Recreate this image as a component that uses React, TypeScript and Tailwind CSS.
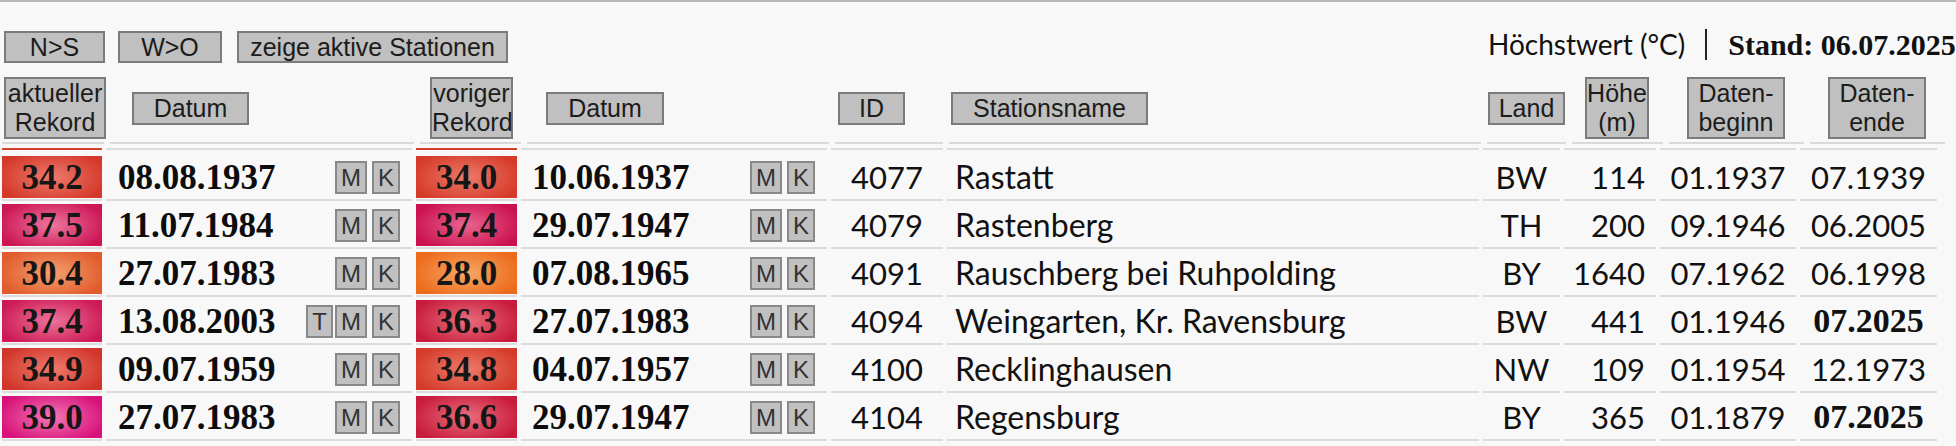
import React from "react";

type Row = {
  a: string;
  ad: string;
  t?: boolean;
  ac: [string, string];
  v: string;
  vd: string;
  vc: [string, string];
  id: string;
  name: string;
  land: string;
  h: string;
  b: string;
  e: string;
  eb?: boolean;
};

const rows: Row[] = [
  { a: "34.2", ad: "08.08.1937", ac: ["#ec7a6c", "#d5392b"], v: "34.0", vd: "10.06.1937", vc: ["#ec7a6a", "#d63b2a"], id: "4077", name: "Rastatt", land: "BW", h: "114", b: "01.1937", e: "07.1939" },
  { a: "37.5", ad: "11.07.1984", ac: ["#ee779e", "#cc1555"], v: "37.4", vd: "29.07.1947", vc: ["#e8658e", "#cb1150"], id: "4079", name: "Rastenberg", land: "TH", h: "200", b: "09.1946", e: "06.2005" },
  { a: "30.4", ad: "27.07.1983", ac: ["#f4a070", "#e15b2b"], v: "28.0", vd: "07.08.1965", vc: ["#f7a866", "#ec6b1b"], id: "4091", name: "Rauschberg bei Ruhpolding", land: "BY", h: "1640", b: "07.1962", e: "06.1998" },
  { a: "37.4", ad: "13.08.2003", t: true, ac: ["#ec749a", "#cd1a55"], v: "36.3", vd: "27.07.1983", vc: ["#e86e7c", "#c81c3c"], id: "4094", name: "Weingarten, Kr. Ravensburg", land: "BW", h: "441", b: "01.1946", e: "07.2025", eb: true },
  { a: "34.9", ad: "09.07.1959", ac: ["#ee7a6c", "#d2352a"], v: "34.8", vd: "04.07.1957", vc: ["#ee7a6a", "#d53b2a"], id: "4100", name: "Recklinghausen", land: "NW", h: "109", b: "01.1954", e: "12.1973" },
  { a: "39.0", ad: "27.07.1983", ac: ["#f478b6", "#d8127a"], v: "36.6", vd: "29.07.1947", vc: ["#e86e7c", "#c91b3c"], id: "4104", name: "Regensburg", land: "BY", h: "365", b: "01.1879", e: "07.2025", eb: true },
];

const OPT = "font-['Lato','Noto_Sans',sans-serif]";
const SERIFB = "font-['Liberation_Serif','Times_New_Roman',serif] font-bold";

const hbox =
  "bg-[#c0c0c0] border-2 border-[#7b7b7b] text-[25px] leading-[29px] text-center text-[#1c1c1c] font-['Liberation_Sans',Arial,sans-serif]";
const one = "h-[33px] mt-[15px]";
const two = "h-[62px]";

function Mini({ children, className = "" }: { children: React.ReactNode; className?: string }) {
  return (
    <div
      className={
        "h-[33px] px-[4px] bg-[#c0c0c0] border-2 border-[#888888] text-[24px] leading-[29px] text-[#333333] font-['Liberation_Sans',Arial,sans-serif] " +
        className
      }
    >
      {children}
    </div>
  );
}

function Buttons({ t }: { t?: boolean }) {
  return (
    <div className="ml-auto flex items-center">
      {t && <Mini className="mr-[2px]">T</Mini>}
      <Mini className="mr-[5px]">M</Mini>
      <Mini>K</Mini>
    </div>
  );
}

const cell = "h-[45px] border-b-2 border-[#dcdcdc]";
const hcell = "h-[67px] border-b-2 border-[#dadada]";

export default function App() {
  return (
    <div className="w-[1956px] h-[446px] overflow-hidden bg-[#f8f8f8] border-t-2 border-[#b9b9b9] text-[#111111]">
      {/* toolbar */}
      <div className="flex items-start mt-[29px] h-[32px]">
        <div className="flex w-[1488px] pl-[4px]">
          <div className={hbox + " w-[101px] h-[32px]"}>N&gt;S</div>
          <div className={hbox + " ml-[13px] w-[104px] h-[32px]"}>W&gt;O</div>
          <div className={hbox + " ml-[15px] w-[271px] h-[32px]"}>zeige aktive Stationen</div>
        </div>
        <div className="flex items-center h-[32px] mt-[-3px]">
          <span className={OPT + " text-[28px] text-[#111111] whitespace-nowrap"}>Höchstwert (°C)</span>
          <span className="ml-[20px] mr-[21px] w-[2px] h-[31px] bg-[#222222]" />
          <span className={SERIFB + " text-[30px] text-[#111111] whitespace-nowrap"}>Stand: 06.07.2025</span>
        </div>
      </div>

      {/* header */}
      <div className="grid grid-cols-[102px_304px_101px_302px_108px_532px_79px_91px_135px_135px] gap-x-[6px] ml-[2px] mt-[14px]">
        <div className={hcell}>
          <div className={hbox + " " + two + " ml-[2px] w-[102px]"}>
            aktueller
            <br />
            Rekord
          </div>
        </div>
        <div className={hcell}>
          <div className={hbox + " " + one + " ml-[22px] w-[117px]"}>Datum</div>
        </div>
        <div className={hcell}>
          <div className={hbox + " " + two + " ml-[10px] w-[83px]"}>
            voriger
            <br />
            Rekord
          </div>
        </div>
        <div className={hcell}>
          <div className={hbox + " " + one + " ml-[19px] w-[118px]"}>Datum</div>
        </div>
        <div className={hcell}>
          <div className={hbox + " " + one + " ml-[3px] w-[67px]"}>ID</div>
        </div>
        <div className={hcell}>
          <div className={hbox + " " + one + " ml-[2px] w-[197px]"}>Stationsname</div>
        </div>
        <div className={hcell}>
          <div className={hbox + " " + one + " ml-[1px] w-[77px]"}>Land</div>
        </div>
        <div className={hcell}>
          <div className={hbox + " " + two + " ml-[13px] w-[64px]"}>
            Höhe
            <br />
            (m)
          </div>
        </div>
        <div className={hcell}>
          <div className={hbox + " " + two + " ml-[18px] w-[98px]"}>
            Daten-
            <br />
            beginn
          </div>
        </div>
        <div className={hcell}>
          <div className={hbox + " " + two + " ml-[18px] w-[98px]"}>
            Daten-
            <br />
            ende
          </div>
        </div>
      </div>

      {/* body */}
      <div className="grid grid-cols-[100px_306px_101px_306px_112px_532px_77px_92px_136px_137px] gap-x-[4px] gap-y-[3px] ml-[2px] mt-[4px]">
        <div className="h-[2px] bg-[#d2412f] mb-[3px]" />
        <div className="h-[2px] bg-[#dcdcdc]" />
        <div className="h-[2px] bg-[#d2412f]" />
        <div className="h-[2px] bg-[#dcdcdc]" />
        <div className="h-[2px] bg-[#dcdcdc]" />
        <div className="h-[2px] bg-[#dcdcdc]" />
        <div className="h-[2px] bg-[#dcdcdc]" />
        <div className="h-[2px] bg-[#dcdcdc]" />
        <div className="h-[2px] bg-[#dcdcdc]" />
        <div className="h-[2px] bg-[#dcdcdc]" />

        {rows.map((r, i) => (
          <React.Fragment key={i}>
            <div className={cell}>
              <div
                className="h-[42px] flex items-center justify-center"
                style={{ background: `radial-gradient(ellipse 55% 65% at 50% 50%, ${r.ac[0]} 0%, ${r.ac[1]} 100%)` }}
              >
                <span className={SERIFB + " text-[35px] leading-none text-[#161616]"}>{r.a}</span>
              </div>
            </div>
            <div className={cell}>
              <div className="h-[42px] flex items-center pl-[12px] pr-[12px]">
                <span className={SERIFB + " text-[35px] leading-none text-[#0d0d0d]"}>{r.ad}</span>
                <Buttons t={r.t} />
              </div>
            </div>
            <div className={cell}>
              <div
                className="h-[42px] flex items-center justify-center"
                style={{ background: `radial-gradient(ellipse 55% 65% at 50% 50%, ${r.vc[0]} 0%, ${r.vc[1]} 100%)` }}
              >
                <span className={SERIFB + " text-[35px] leading-none text-[#161616]"}>{r.v}</span>
              </div>
            </div>
            <div className={cell}>
              <div className="h-[42px] flex items-center pl-[11px] pr-[12px]">
                <span className={SERIFB + " text-[35px] leading-none text-[#0d0d0d]"}>{r.vd}</span>
                <Buttons />
              </div>
            </div>
            <div className={cell}>
              <div className={OPT + " h-[42px] flex items-center justify-center text-[31px] leading-none"}>{r.id}</div>
            </div>
            <div className={cell}>
              <div className={OPT + " h-[42px] flex items-center pl-[8px] text-[32px] leading-none whitespace-nowrap"}>{r.name}</div>
            </div>
            <div className={cell}>
              <div className={OPT + " h-[42px] flex items-center justify-center text-[31px] leading-none"}>{r.land}</div>
            </div>
            <div className={cell}>
              <div className={OPT + " h-[42px] flex items-center justify-end pr-[11px] text-[31px] leading-none"}>{r.h}</div>
            </div>
            <div className={cell}>
              <div className={OPT + " h-[42px] flex items-center justify-center text-[31px] leading-none"}>{r.b}</div>
            </div>
            <div className={cell}>
              {r.eb ? (
                <div className={SERIFB + " h-[42px] flex items-center justify-center text-[34px] leading-none"}>{r.e}</div>
              ) : (
                <div className={OPT + " h-[42px] flex items-center justify-center text-[31px] leading-none"}>{r.e}</div>
              )}
            </div>
          </React.Fragment>
        ))}
      </div>
    </div>
  );
}
